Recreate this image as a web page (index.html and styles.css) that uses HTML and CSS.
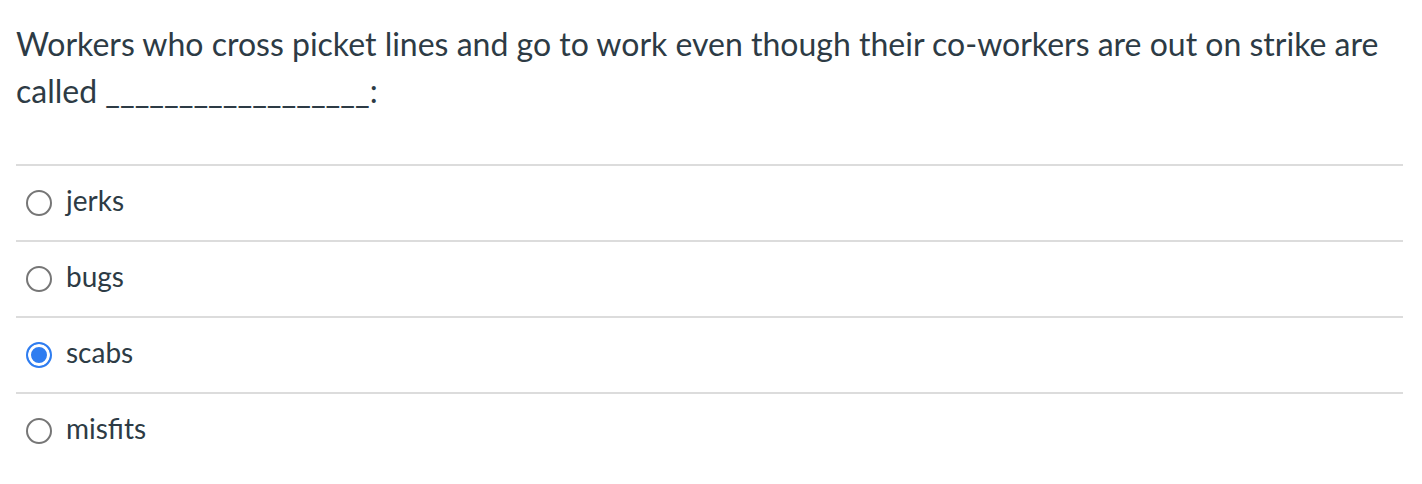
FILE: index.html
```html
<!DOCTYPE html>
<html>
<head>
<meta charset="utf-8">
<link rel="stylesheet" href="styles.css">
</head>
<body>
<div class="question">
  <p class="question-text">Workers who cross picket lines and go to work even though their co-workers are out on strike are called __________________:</p>
  <div class="answers">
    <label class="answer"><span class="radio"></span><span class="label">jerks</span></label>
    <label class="answer"><span class="radio"></span><span class="label">bugs</span></label>
    <label class="answer"><span class="radio checked"></span><span class="label">scabs</span></label>
    <label class="answer"><span class="radio"></span><span class="label">misfits</span></label>
  </div>
</div>
</body>
</html>
```
FILE: styles.css
```css
html, body {
  margin: 0;
  padding: 0;
  background: #ffffff;
}
body {
  font-family: Lato, "Liberation Sans", sans-serif;
  color: #2d3b45;
}
.question {
  width: 1387px;
  padding: 0 0 0 16px;
}
.question-text {
  margin: 0;
  padding-top: 20px;
  font-size: 32px;
  line-height: 47px;
  height: 144px;
}
.answer {
  display: flex;
  align-items: center;
  height: 74px;
  border-top: 2px solid #dcdcdc;
}
.radio {
  box-sizing: border-box;
  width: 26px;
  height: 26px;
  border-radius: 50%;
  border: 2px solid #767676;
  margin-left: 10px;
  margin-right: 14px;
  flex: none;
}
.radio.checked {
  border: 2px solid #2f7df0;
  background: #2f7df0;
  box-shadow: inset 0 0 0 3px #ffffff;
}
.label {
  font-size: 28px;
  margin-bottom: 7px;
}
```
